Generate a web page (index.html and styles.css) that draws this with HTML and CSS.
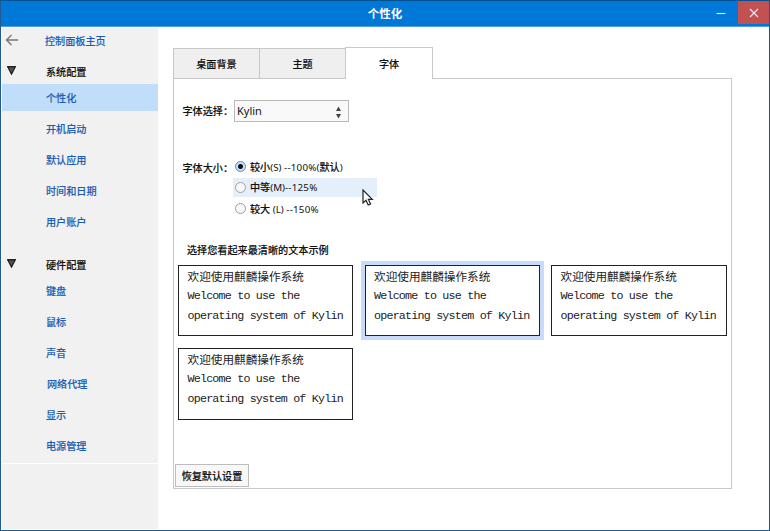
FILE: index.html
```html
<!DOCTYPE html>
<html lang="zh-CN">
<head>
<meta charset="utf-8">
<title>个性化</title>
<link rel="stylesheet" href="styles.css">
</head>
<body>
<div class="window">
  <header class="titlebar">
    <h1>个性化</h1>
    <button class="min" aria-label="最小化"><svg width="10" height="10" viewBox="0 0 10 10"><path d="M0.5 5.5H9.5"/></svg></button>
    <button class="close" aria-label="关闭"><svg width="10" height="10" viewBox="0 0 10 10"><path d="M1 1L9 9M9 1L1 9"/></svg></button>
  </header>
  <div class="body">
    <nav class="sidebar">
      <div class="menu">
        <a class="home"><svg class="back" width="14" height="12" viewBox="0 0 14 12"><path d="M13 6H1.5M6.5 1L1.5 6L6.5 11"/></svg><span>控制面板主页</span></a>
        <div class="group"><svg class="tri" width="9" height="9" viewBox="0 0 9 9"><path d="M.7 .7H8.3L4.5 8Z"/></svg><span>系统配置</span></div>
        <a class="item active">个性化</a>
        <a class="item">开机启动</a>
        <a class="item">默认应用</a>
        <a class="item">时间和日期</a>
        <a class="item">用户账户</a>
        <div class="group second"><svg class="tri" width="9" height="9" viewBox="0 0 9 9"><path d="M.7 .7H8.3L4.5 8Z"/></svg><span>硬件配置</span></div>
        <a class="item">键盘</a>
        <a class="item">鼠标</a>
        <a class="item">声音</a>
        <a class="item network">网络代理</a>
        <a class="item">显示</a>
        <a class="item">电源管理</a>
      </div>
    </nav>
    <main>
      <div class="tabs">
        <div class="tab">桌面背景</div>
        <div class="tab">主题</div>
        <div class="tab current">字体</div>
      </div>
      <section class="panel">
        <div class="row family">
          <label>字体选择：</label>
          <div class="select"><span>Kylin</span><svg width="7" height="13" viewBox="0 0 7 13"><path d="M3.5 .5L6 5H1ZM3.5 12.5L6 8H1Z"/></svg></div>
        </div>
        <div class="row size">
          <label>字体大小：</label>
          <div class="radios">
            <div class="radio checked"><i></i><span>较小<b>(S) <em>--100%</em>(</b>默认<b>)</b></span></div>
            <div class="radio hover"><i></i><span>中等<b>(M)<em>--125%</em></b></span>
              <svg class="cursor" width="12" height="18" viewBox="0 0 12 18"><path d="M1 1V14L4 11.3L6.2 16L8.6 14.9L6.4 10.4H10.3Z"/></svg>
            </div>
            <div class="radio last"><i></i><span>较大<b> (L) <em>--150%</em></b></span></div>
          </div>
        </div>
        <p class="hint">选择您看起来最清晰的文本示例</p>
        <div class="samples">
          <div class="sample"><p class="cn">欢迎使用麒麟操作系统</p><p>Welcome to use the</p><p>operating system of Kylin</p></div>
          <div class="sample selected"><p class="cn">欢迎使用麒麟操作系统</p><p>Welcome to use the</p><p>operating system of Kylin</p></div>
          <div class="sample"><p class="cn">欢迎使用麒麟操作系统</p><p>Welcome to use the</p><p>operating system of Kylin</p></div>
          <div class="sample"><p class="cn">欢迎使用麒麟操作系统</p><p>Welcome to use the</p><p>operating system of Kylin</p></div>
        </div>
        <button class="reset">恢复默认设置</button>
      </section>
    </main>
  </div>
</div>
</body>
</html>
```
FILE: styles.css
```css
* { box-sizing: border-box; }
body {
  margin: 0;
  font: 500 10.15px/16px "Noto Sans CJK SC", sans-serif;
  color: #111;
  -webkit-text-stroke: 0.12px;
}
h1, p { margin: 0; }
button { font: inherit; padding: 0; border: 0; color: inherit; }
svg { display: block; }
.window {
  width: 770px;
  height: 531px;
  border: 1px solid #205a8f;
  border-top-color: #05508f;
  background: #fff;
  display: flex;
  flex-direction: column;
}
.titlebar {
  height: 26px;
  flex: none;
  display: flex;
  background: #0078d8;
  border-bottom: 1px solid #4e9fdc;
  color: #fff;
}
.titlebar h1 {
  flex: 1;
  padding-left: 62px;
  text-align: center;
  font-size: 11.5px;
  line-height: 25px;
  font-weight: 700;
  -webkit-text-stroke: 0;
}
.titlebar svg { margin: auto; fill: none; stroke: #e8f1fa; stroke-width: 1.1; }
.min { width: 31px; background: none; }
.titlebar .min svg { margin: 7px 9px 8px 9px; }
.close { width: 31px; height: 23px; background: #c35152; }
.body { flex: 1; display: flex; min-height: 0; }
.sidebar {
  width: 156px;
  margin: 1px 0 1px 1px;
  background: #f1f1f1;
}
.menu { height: 436px; border-bottom: 1px solid #fff; }
.home { height: 25px; display: flex; align-items: center; color: #1d5eb3; }
.back { margin: -2px 26px 0 3px; fill: none; stroke: #777; stroke-width: 1.4; }
.group { height: 31px; padding-top: 6px; display: flex; align-items: center; }
.group.second { margin-top: 12px; height: 29px; padding-top: 2px; }
.tri { margin: -3px 30px 0 5px; fill: #555; stroke: #222; stroke-width: 1.4; }
.item { display: block; height: 31px; line-height: 31px; padding-left: 44px; color: #1d5eb3; }
.item.active { height: 27px; line-height: 27px; margin-bottom: 2px; background: #c0ddfa; }
.group.second + .item { height: 28px; line-height: 25px; }
.item.network { padding-left: 45px; }
main { padding: 20px 0 0 15px; width: 574px; }
.tabs { display: flex; align-items: flex-end; height: 32px; position: relative; }
.tab {
  width: 87px;
  height: 31px;
  line-height: 30px;
  text-align: center;
  background: #efefef;
  border: 1px solid #c8c8c8;
}
.tab + .tab { border-left: 0; width: 85px; }
.tab + .tab.current { height: 32px; line-height: 31px; width: 88px; background: #fff; border-left: 1px solid #c8c8c8; border-bottom: 0; }
.tab:nth-child(2) { border-right: 0; }
.panel {
  width: 559px;
  height: 411px;
  margin-top: -1px;
  border: 1px solid #c8c8c8;
  display: flex;
  flex-direction: column;
  align-items: flex-start;
}
.row { display: flex; }
.row label { width: 51px; margin-left: 8.5px; margin-right: .5px; white-space: nowrap; }
.family { margin-top: 21px; height: 22px; line-height: 22px; }
.select {
  width: 115px;
  height: 22px;
  padding: 0 6px 0 2px;
  display: flex;
  align-items: center;
  justify-content: space-between;
  border: 1px solid #b9b9b9;
  background: #f9f9f9;
  font: 11px/20px "Noto Sans", sans-serif;
  -webkit-text-stroke: 0;
}
.select svg { fill: #444; margin-top: 2px; }
.size { margin-top: 34px; height: 64px; }
.size label { line-height: 24px; margin-right: -.5px; }
.radio { width: 144px; height: 22px; display: flex; align-items: center; padding-left: 2px; white-space: pre; position: relative; }
.radio.hover { height: 19px; background: #e3effb; }
.radio.last { height: 24px; }
.radio i { width: 11px; height: 11px; border: 1px solid #a0a0a0; border-radius: 50%; background: #f8f8f8; margin-right: 4px; }
.radio.checked i { border-color: #4b8ed0; background: radial-gradient(circle, #111 0 2px, #c8e2fa 3px); }
.radio i { margin-top: -1px; }
.radio b { font: 9.8px/16px "Noto Sans", sans-serif; -webkit-text-stroke: 0; }
.radio em { font-style: normal; letter-spacing: 0.2px; }
.cursor { position: absolute; left: 129px; top: 11px; fill: #fff; stroke: #222; stroke-width: 1.2; }
.hint { margin: 22px 0 0 13px; }
.samples {
  margin: 7px 0 0 4px;
  display: grid;
  grid-template-columns: 175px 175px 176px;
  grid-auto-rows: 71px;
  gap: 12px 11.5px;
}
.sample:nth-child(4) { height: 72px; }
.sample {
  border: 1px solid #222;
  padding: 0 0 0 8.5px;
  white-space: nowrap;
  color: #222;
  font: 11.7px/19.5px "Liberation Mono", monospace;
  letter-spacing: -0.8px;
  -webkit-text-stroke: 0;
}
.sample .cn { font: 11.65px/19px "Noto Sans CJK SC", sans-serif; letter-spacing: 0; padding-bottom: 2px; }
.sample.selected { box-shadow: 0 0 0 4px #c9dbfb; }
.reset { margin: auto 0 1px 1px; width: 74px; height: 23px; border: 1px solid #bdbdbd; background: #f8f8f8; }
```
